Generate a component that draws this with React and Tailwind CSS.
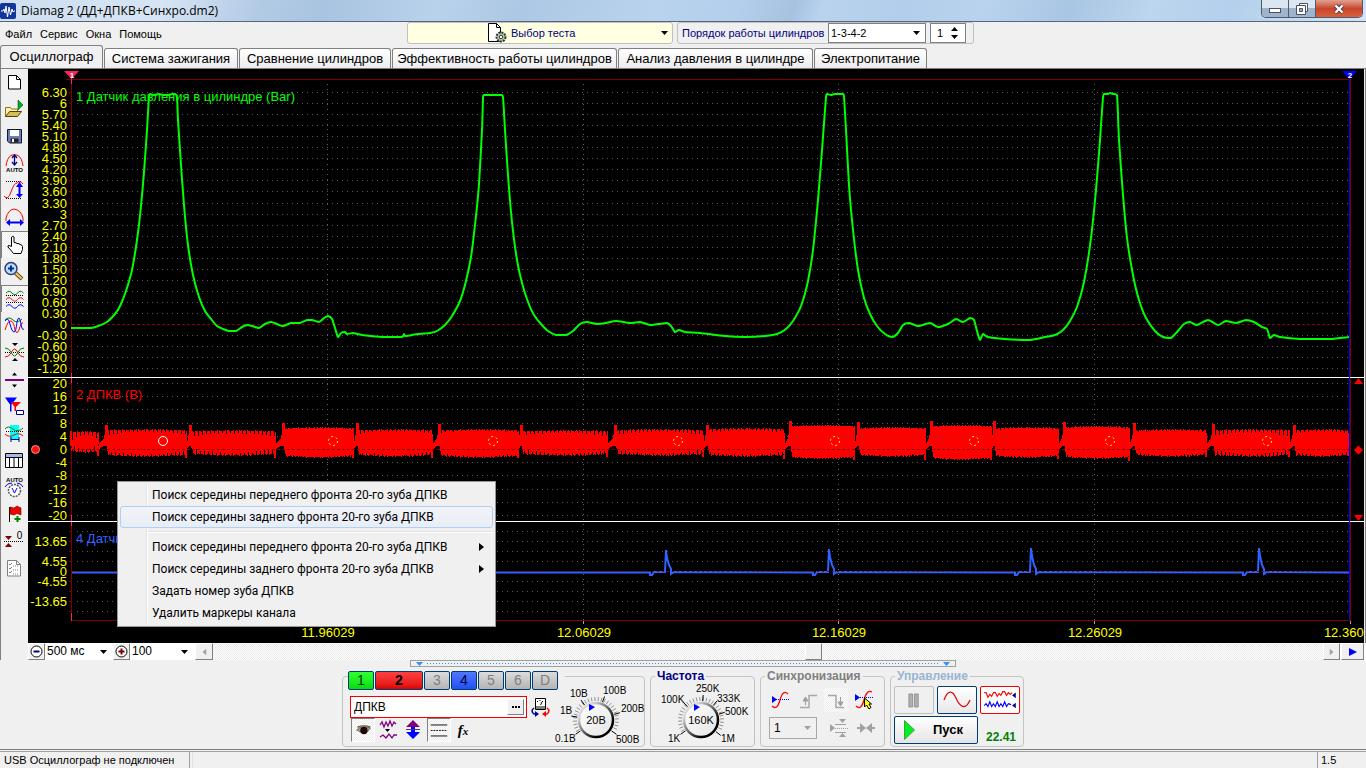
import React from 'react';

const SANS = "font-['Liberation_Sans',Arial,sans-serif]";
const CHECKER = 'bg-[repeating-conic-gradient(#ffffff_0_25%,#ebebeb_0_50%)] bg-[length:2px_2px]';

/* ---------- trace data ---------- */

const PRESSURE = [
  [71, 328], [91, 328], [98, 326], [107, 322], [115, 314], [120, 306], [126, 291], [132, 270], [137, 240], [141, 206],
  [144, 172], [147, 130], [149, 97], [150, 94], [154, 95], [159, 94], [163, 95], [168, 95], [172, 94], [175, 94], [177, 97],
  [178, 120], [181, 165], [184, 205], [188, 245], [193, 275], [199, 297], [205, 311], [211, 319], [217, 326], [223, 329],
  [229, 331], [236, 331], [242, 327], [247, 325], [252, 326], [259, 328], [265, 324], [271, 322], [277, 324], [283, 326],
  [291, 323], [300, 323], [307, 320], [312, 320], [319, 322], [324, 318], [328, 316], [332, 319], [335, 328], [338, 337],
  [341, 333], [345, 332], [347, 334], [353, 333], [362, 335], [382, 337], [402, 337], [404, 334], [405, 336], [412, 335],
  [418, 334], [430, 333], [437, 331], [445, 325], [452, 316], [460, 301], [466, 281], [471, 257], [475, 225], [479, 184],
  [482, 130], [483, 98], [484, 95], [501, 95], [503, 97], [505, 130], [508, 175], [512, 222], [517, 260], [522, 283],
  [528, 302], [534, 315], [541, 324], [548, 331], [556, 335], [566, 335], [573, 331], [580, 324], [587, 322], [597, 324],
  [606, 323], [616, 321], [630, 323], [640, 322], [650, 325], [658, 324], [667, 323], [671, 326], [675, 332], [679, 330],
  [685, 332], [700, 333], [725, 336], [745, 337], [765, 336], [777, 334], [786, 329], [793, 321], [801, 306], [808, 281],
  [813, 250], [818, 200], [822, 150], [826, 97], [827, 94], [831, 95], [835, 94], [843, 94], [844, 97], [846, 130], [849, 185], [853, 230],
  [858, 270], [864, 298], [870, 314], [877, 326], [885, 334], [892, 337], [898, 333], [903, 325], [909, 323], [918, 326],
  [930, 323], [938, 327], [948, 324], [956, 319], [963, 322], [970, 318], [974, 320], [977, 331], [980, 340], [983, 334],
  [988, 337], [1005, 339], [1030, 340], [1045, 337], [1055, 335], [1063, 330], [1070, 321], [1077, 307], [1084, 282],
  [1091, 238], [1096, 190], [1100, 140], [1103, 97], [1104, 94], [1108, 94], [1110, 93], [1113, 94], [1117, 95], [1119, 140],
  [1123, 195], [1127, 238], [1133, 275], [1139, 300], [1146, 318], [1155, 331], [1163, 337], [1171, 338], [1177, 332],
  [1184, 324], [1190, 322], [1197, 325], [1208, 320], [1218, 325], [1226, 321], [1236, 323], [1246, 320], [1254, 322],
  [1262, 327], [1267, 329], [1270, 338], [1274, 335], [1280, 337], [1300, 339], [1330, 339], [1349, 337],
];

function smoothPath(points) {
  let d = `M${points[0][0]} ${points[0][1]}`;
  for (let i = 0; i < points.length - 1; i += 1) {
    const p0 = points[Math.max(0, i - 1)];
    const p1 = points[i];
    const p2 = points[i + 1];
    const p3 = points[Math.min(points.length - 1, i + 2)];
    const k = 0.12;
    const lo = Math.min(p1[1], p2[1]);
    const hi = Math.max(p1[1], p2[1]);
    const clamp = (v, a, b) => Math.max(a, Math.min(b, v));
    const c1 = [clamp(p1[0] + (p2[0] - p0[0]) * k, p1[0], p2[0]), clamp(p1[1] + (p2[1] - p0[1]) * k, lo, hi)];
    const c2 = [clamp(p2[0] - (p3[0] - p1[0]) * k, p1[0], p2[0]), clamp(p2[1] - (p3[1] - p1[1]) * k, lo, hi)];
    d += `C${c1[0].toFixed(1)} ${c1[1].toFixed(1)} ${c2[0].toFixed(1)} ${c2[1].toFixed(1)} ${p2[0]} ${p2[1]}`;
  }
  return d;
}

/* start, end, top, bottom, notch depth, dip bottom, next spike top */
const BURSTS = [
  [71, 99, 431, 453, 7, 456, 425],
  [106, 187, 429, 457, 4, 458, 425],
  [190, 276, 430, 456, 5, 458, 423],
  [283, 354, 427, 458, 1, 458, 423],
  [357, 433, 429, 457, 3, 458, 424],
  [439, 519, 429, 458, 2, 458, 425],
  [521, 608, 430, 456, 4, 457, 425],
  [615, 704, 429, 456, 4, 457, 425],
  [707, 785, 428, 457, 3, 459, 421],
  [790, 855, 425, 459, 0, 460, 422],
  [858, 926, 427, 457, 1, 460, 421],
  [931, 992, 425, 460, 0, 460, 421],
  [994, 1059, 427, 458, 1, 459, 422],
  [1064, 1130, 426, 459, 1, 461, 423],
  [1134, 1207, 429, 457, 2, 457, 424],
  [1213, 1290, 429, 457, 5, 457, 425],
  [1294, 1349, 429, 457, 3, 456, 430],
];

function crankPath() {
  let d = '';
  let spike = 431;
  BURSTS.forEach(([a, b, top, bottom, notch, dip, next], n) => {
    const upper = [];
    const lower = [];
    for (let x = a + (n ? 2 : 0); x < b; x += 1) {
      const t = (x - a) / (b - a);
      const edge = 1 - Math.sin(Math.PI * t);
      const wob = ((x * 7 + n * 5) % 11) / 10;
      const cut = x % 4 === n % 4 ? notch * (0.5 + edge * 0.6) : 0;
      const y1 = Math.round(top + edge * 0.7 + wob * 1.2 + cut);
      const y2 = Math.round(bottom - edge * 1.6 - wob * 1.4 - (x % 4 === (n + 2) % 4 ? notch * (0.4 + edge * 0.6) : 0));
      upper.push(`L${x} ${y1}H${x + 1}`);
      lower.unshift(`L${x + 1} ${y2}H${x}`);
    }
    d += `M${a - 1} 446V${spike}H${a + 2}${upper.join('')}L${b} 444V${dip}H${b - 2}V${bottom - 2}${lower.join('')}L${a + 1} 446Z`;
    if (n < BURSTS.length - 1) {
      const c = BURSTS[n + 1][0];
      d += `M${b - 1} 450L${b} 444L${c - 2} 438L${c - 1} 432H${c + 1}V444L${b} 449Z`;
    }
    spike = next;
  });
  return d;
}

const PRESSURE_TICKS = [
  '6.30', '6', '5.70', '5.40', '5.10', '4.80', '4.50', '4.20', '3.90', '3.60', '3.30', '3', '2.70', '2.40', '2.10',
  '1.80', '1.50', '1.20', '0.90', '0.60', '0.30', '0', '-0.30', '-0.60', '-0.90', '-1.20',
].map((label, i) => [label, Math.round(92 + i * 11.05)]);
const CRANK_TICKS = ['20', '16', '12', '8', '4', '0', '-4', '-8', '-12', '-16', '-20'].map((label, i) => [label, Math.round(383 + i * 13.2)]);
const SYNC_TICKS = [['13.65', 541], ['4.55', 561], ['0', 571], ['-4.55', 581], ['-13.65', 601]];
const SYNC_GRID = [531, 541, 551, 561, 581, 591, 601, 611];
const TIME_TICKS = [[327, '11.96029'], [583, '12.06029'], [838, '12.16029'], [1094, '12.26029'], [1350, '12.36029']];
const SPARKS = [[666, 550], [829, 549], [1031, 548], [1259, 548]];

function Scope() {
  const rows = [
    ...PRESSURE_TICKS.filter((t) => t[0] !== '0').map((t) => t[1]),
    ...CRANK_TICKS.filter((t) => t[0] !== '0').map((t) => t[1]),
    ...SYNC_GRID,
  ];
  const spark = SPARKS.map(([x, y]) => `L${x - 16} 572.5V575H${x - 14}L${x - 12} 572H${x - 1}L${x} ${y}L${x + 1} ${y + 8}L${x + 3} 565L${x + 5} 569V574L${x + 8} 572`).join('');
  return (
    <svg viewBox="28 69 1336 574" className={`block h-auto w-full bg-black ${SANS}`} role="img" aria-label="Осциллограмма">
      <g shapeRendering="crispEdges" fill="none">
        {rows.map((y) => (
          <path key={y} d={`M77 ${y + 0.5}H1348`} stroke="#585858" strokeDasharray="1 4" />
        ))}
        {TIME_TICKS.slice(0, 4).map(([x]) => (
          <path key={x} d={`M${x + 0.5} 84V620`} stroke="#606060" strokeDasharray="1 4" />
        ))}
        {TIME_TICKS.map(([x]) => (
          <path key={x} d={`M${x + 0.5} 621v3`} stroke="#a0a0a0" />
        ))}
        <path d="M72 324.5H1350" stroke="#8b0000" strokeDasharray="3 2" />
        <path d="M66 79.5H1350.5V620.5H71.5V79" stroke="#800000" />
        <path d="M71.5 77V84M71.5 373V383M71.5 515V526M71.5 613V621" stroke="#ff2060" />
        {rows.map((y) => (
          <path key={y} d={`M69 ${y + 0.5}h2`} stroke="#800000" />
        ))}
      </g>
      <path d={smoothPath(PRESSURE)} fill="none" stroke="#00ff00" strokeWidth="2" strokeLinejoin="round" />
      <path d={crankPath()} fill="#ff0000" shapeRendering="crispEdges" />
      <g shapeRendering="crispEdges" fill="none">
        <path d="M77 436.5H1348" stroke="#6b4a4a" strokeDasharray="1 4" />
        <path d="M72 449.5H1350" stroke="#8b0000" strokeDasharray="3 2" />
      </g>
      <path d={`M72 572.5${spark}L1349 572.5`} fill="none" stroke="#2f62ff" strokeWidth="2" />
      <path d="M72 571.5H1348" stroke="#6a1030" strokeDasharray="2 3" shapeRendering="crispEdges" />
      <path d="M28 377.5H1364M28 521.5H1364" stroke="#ffffff" shapeRendering="crispEdges" />
      <path d="M1349.5 76V620" stroke="#0000ff" shapeRendering="crispEdges" />
      <circle cx="163" cy="441" r="4.5" fill="none" stroke="#ffffff" />
      {[333, 493, 678, 835, 974, 1110, 1267].map((x) => (
        <circle key={x} cx={x} cy="441" r="4.5" fill="none" stroke="#ffff00" strokeDasharray="2 2.7" />
      ))}
      <path d="M64 71H79L71.500 79Z" fill="#ff2060" />
      <path d="M1342 71H1357L1349.500 79Z" fill="#0000ff" />
      <g fill="#ffffff" fontSize="8" fontWeight="700" textAnchor="middle">
        <text x="72" y="78">1</text>
        <text x="1350" y="78">2</text>
      </g>
      <circle cx="35.5" cy="449.500" r="4" fill="#ff1010" stroke="#ff9090" />
      <path d="M1354 384h9l-4.500-6ZM1354 450l4.500-4.500 4.500 4.500-4.500 4.500ZM1354 515h9l-4.500 6Z" fill="#ff0000" />
      <g fontSize="13" fill="#ffff00" textAnchor="end">
        {[...PRESSURE_TICKS, ...CRANK_TICKS, ...SYNC_TICKS].map(([label, y], i) => (
          <text key={i} x="67" y={y + 5}>{label}</text>
        ))}
      </g>
      <g fontSize="13" fill="#ffff00" textAnchor="middle">
        {TIME_TICKS.map(([x, label]) => (
          <text key={x} x={x + 1} y="637">{label}</text>
        ))}
      </g>
      <g fontSize="13">
        <text x="76" y="101" fill="#00ff00">1 Датчик давления в цилиндре (Bar)</text>
        <text x="76" y="399" fill="#ff0000">2 ДПКВ (В)</text>
        <text x="76" y="543" fill="#2f62ff">4 Датчик</text>
      </g>
    </svg>
  );
}

/* ---------- side toolbar ---------- */

const TOOLS = [
  ['Новый', <g><path d="M7.5 6.500h8l4 4v9.500h-12z" fill="#fff" stroke="#000" /><path d="M15.500 6.500v4h4" fill="none" stroke="#000" /></g>],
  ['Открыть', <g><path d="M17 4l5 5-5 5z" fill="#00b020" stroke="#005010" strokeWidth=".6" /><path d="M4.500 20.500v-9h5l1 1.500h6v3" fill="#fff2a8" stroke="#8a7420" /><path d="M4.500 20.500l4-5h12l-4 5z" fill="#d8bc58" stroke="#4e4210" /></g>],
  ['Сохранить', <g><path d="M6.500 6.500h14v13.500h-12l-2-2z" fill="#6c7fb4" stroke="#101830" /><path d="M9 7h9v6h-9z" fill="#fff" /><path d="M9.500 15.500h8v4h-8z" fill="#222" /><path d="M11 16h2v3h-2z" fill="#fff" /></g>],
  ['Авто масштаб', <g><path d="M5 16Q6 8 10 5.500Q13.500 3.500 17 5.500Q21 8 22 16" fill="none" stroke="#f00" /><path d="M13.500 5v9M11 8l2.500-3 2.500 3M11 12l2.500 3 2.500-3" fill="none" stroke="#00008b" strokeWidth="1.300" /><text x="13.500" y="22" fontSize="6" fontWeight="700" textAnchor="middle" fill="#000">AUTO</text></g>],
  ['Масштаб по вертикали', <g fill="none"><path d="M5 4.500h16M5 21.500h15" stroke="#000" strokeDasharray="1 1" /><path d="M3 19q4 5 7-4t6-9q3-3 6 1" stroke="#f00" /><path d="M18.500 7v12" stroke="#00f" strokeWidth="2" /><path d="M15 10l3.500-5 3.500 5zM15 17l3.500 4 3.500-4z" fill="#00f" /></g>],
  ['Масштаб по горизонтали', <g fill="none"><path d="M5 17V14q2-8 8-9 7 1 9 9v3" stroke="#f00" /><path d="M8 18.500h12" stroke="#00f" strokeWidth="2" /><path d="M5 18.500l4-3.500v7zM23 18.500l-4-3.500v7z" fill="#00f" /></g>],
  ['Рука', <path d="M10.500 15.500V6q1.200-1.500 2.500 0v5.500l2 .3 1 .7 2 .2 1 .8 1.500.4 1 1.600v3l-1.500 4h-7.500l-2-2.500-3.500-4q-.5-1.500 1-1.500z" fill="#fff" stroke="#000" />, true],
  ['Лупа', <g><path d="M14.500 15l6.500 6" stroke="#6b4a10" strokeWidth="4" /><path d="M14.500 15l6 5.500" stroke="#f0cc70" strokeWidth="2" /><circle cx="10" cy="10.500" r="6" fill="#b9dcff" stroke="#30406a" strokeWidth="1.500" /><path d="M7 10.500h6M10 7.500v6" stroke="#003090" strokeWidth="2" /></g>],
  ['Раздельно', <g fill="none"><path d="M5 8q3-3.500 6 0t5.500 0 6 0" stroke="#008000" /><path d="M5 10.500h18M5 17.500h18" stroke="#000" strokeDasharray="1 1" /><path d="M5 14.500q3-3.500 6 0t5.500 0 6 0" stroke="#f00" /><path d="M5 21.500q3-3.500 6 0t5.500 0 6 0" stroke="#00f" /></g>, true],
  ['Совместно', <g fill="none"><path d="M4 8q4-4 8 0t9-1" stroke="#008000" /><path d="M4 18q3-10 6-9t4 9q2 5 4 0 2-8 4-7" stroke="#f00" /><path d="M4 9q3-5 5 3t4 8q2 0 3-10 2-9 4 2 1 7 3 5" stroke="#00f" /></g>],
  ['Сжать', <g fill="none"><path d="M4 13.500h19" stroke="#000" strokeDasharray="1 1" /><path d="M4 18q4 0 6-4 3.500-8 7 0 2 4 6 4" stroke="#f00" /><path d="M4 9q4 0 6 4 3.500 8 7 0 2-4 6-4" stroke="#008000" /><path d="M11 4h6l-3 3zM11 22h6l-3-3z" fill="#000" /></g>],
  ['Разделитель', <g><path d="M4 13h19v2H4z" fill="#800080" /><path d="M11 9.500h5l-2.500-3zM11 18.500h5l-2.500 3z" fill="#000" /></g>],
  ['Маркеры', <g><path d="M4 4.500h12l-5.500 7v7h-1.500v-7z" fill="#00f" /><path d="M10 9h10l-5 5v4h-1.500v-4z" fill="#f00" /><path d="M15.500 17.500h7v4h-7z" fill="#fff" stroke="#00008b" /></g>],
  ['Диапазон', <g fill="none"><path d="M9 5h9v15H9z" fill="#00ffff" /><path d="M4 9q3-4 8 0t10-1" stroke="#008000" /><path d="M5 11.500h18" stroke="#000" strokeDasharray="1 1" /><path d="M4 14q4 4 9 1t9 1" stroke="#f00" /><path d="M10 19.500h8M10 17v5M18 17v5" stroke="#00008b" /></g>],
  ['Таблица', <g><path d="M4.500 6.500h17v14h-17z" fill="#fff" stroke="#000" /><path d="M5 7h16v3H5z" fill="#a8b8e8" /><path d="M5 10.500h16M8.500 10v10M13 10v10M17.500 10v10" stroke="#000" /></g>],
  ['Авто напряжение', <g><text x="13.500" y="8" fontSize="6" fontWeight="700" textAnchor="middle" fill="#000">AUTO</text><path d="M4 13q2-4 7-4M22 13q-2-4-6-4" stroke="#00f" fill="none" /><circle cx="13.500" cy="16.500" r="6" fill="#fff" stroke="#555" strokeWidth="1.500" strokeDasharray="2 1" /><path d="M11 14l2.500 5 2.500-5" fill="none" stroke="#00f" /></g>],
  ['Добавить флаг', <g><path d="M8.500 6v15" stroke="#000" /><path d="M9 6l4 1 3-2 4 2v7l-4-1.500-3 1.500-4-1z" fill="#f00000" stroke="#700000" strokeWidth=".6" /><path d="M16.500 15v6M13.500 18h6" stroke="#008000" strokeWidth="2" /></g>],
  ['Сброс нуля', <g><path d="M4 8h7l-3.500 4zM4 19h7l-3.500-4z" fill="#800000" /><path d="M3 13.500h20" stroke="#000" strokeDasharray="1 1" /><text x="18.500" y="11" fontSize="10" textAnchor="middle" fill="#000">0</text></g>],
  ['Список', <g fill="none" stroke="#808080"><path d="M6.500 5.500h9l4 4v11.500h-13z" fill="#fff" /><path d="M15.500 5.500v4h4M8 9l1 1 2-2M8 13l1 1 2-2M8 17l1 1 2-2" /><path d="M12 11h6M12 15h6M12 19h6" strokeDasharray="1 1" /></g>],
];

function Toolbar() {
  return (
    <div role="toolbar" aria-label="Инструменты" className="flex w-7 shrink-0 flex-col border-l border-[#808080]">
      {TOOLS.map(([label, icon, pressed]) => (
        <button
          key={label}
          type="button"
          aria-label={label}
          aria-pressed={Boolean(pressed)}
          className={`block h-[27px] w-full overflow-hidden border-t border-l ${pressed ? `border-[#808080] ${CHECKER}` : 'border-transparent'}`}
        >
          <svg viewBox="1 1 27 27" className={`block size-[27px] ${SANS}`}>{icon}</svg>
        </button>
      ))}
    </div>
  );
}

/* ---------- window chrome ---------- */

function TitleBar() {
  return (
    <header className="flex h-[22px] items-start border-b border-[#56677d] bg-[linear-gradient(110deg,#cfdff0_0%,#d6e4f3_12%,#b2cbe5_19%,#a9c4e0_24%,#b9d2ec_32%,#adc8e4_38%,#b9d3ee_48%,#b3cfeb_54%,#a6c2df_58%,#b9d3ee_60%,#b3ceea_66%,#b9d3ee_72%,#a9c6e2_78%,#bdd5ee_84%,#b4d0ec_90%,#d5e4f4_100%)]">
      <svg viewBox="0 0 16 16" className="mt-[3px] size-4 shrink-0">
        <rect width="16" height="16" rx="2" fill="#12359c" />
        <path d="M1 8h2l1-2 1 4 1-7 1.500 11L9 4l1.500 8L12 6l1 3 1-1h1" fill="none" stroke="#fff" />
      </svg>
      <h1 className="ml-[5px] text-[12px] leading-[21px] font-['Open_Sans','Noto_Sans',sans-serif] text-black">Diamag 2 (ДД+ДПКВ+Синхро.dm2)</h1>
      <div className="mr-[3px] ml-auto flex h-[18px] overflow-hidden rounded-b-[5px] border border-t-0 border-[#4c5b6e]">
        <button type="button" aria-label="Свернуть" className="flex w-[27px] items-center justify-center border-r border-[#4c5b6e] bg-linear-to-b from-[#dbe6f1] from-50% to-[#9fb4ca] to-50%">
          <span className="mt-[3px] block h-[5px] w-3 border border-[#4c5060] bg-white" />
        </button>
        <button type="button" aria-label="Восстановить" className="flex w-[27px] items-center justify-center border-r border-[#4c5b6e] bg-linear-to-b from-[#dbe6f1] from-50% to-[#9fb4ca] to-50%">
          <svg viewBox="0 0 12 12" className="size-3" fill="#fff" stroke="#4c5060"><path d="M3.500.5h8v8h-8z" /><path d="M.5 2.500h9v9h-9z" /><path d="M3.500 5.500h3v3h-3z" fill="#9fb4ca" /></svg>
        </button>
        <button type="button" aria-label="Закрыть" className="flex w-[46px] items-center justify-center bg-linear-to-b from-[#e0a090] from-0% via-[#c8452c] via-50% to-[#d8603c]">
          <svg viewBox="0 0 12 10" className="h-[10px] w-3"><path d="M2.500 1.500l7 7M9.500 1.500l-7 7" stroke="#4c4050" strokeWidth="4" /><path d="M2.500 1.500l7 7M9.500 1.500l-7 7" stroke="#fff" strokeWidth="2.200" /></svg>
        </button>
      </div>
    </header>
  );
}

function Caret({ className = '' }) {
  return (
    <svg viewBox="0 0 7 4" className={`pointer-events-none h-1 w-[7px] shrink-0 ${className}`}><path d="M0 0h7L3.500 4z" fill="currentColor" /></svg>
  );
}

function MenuRow() {
  return (
    <div className={`flex h-6 items-start text-[11px] ${SANS}`}>
      <nav className="flex w-[407px] shrink-0 items-center gap-2 pl-[5px] leading-6 text-black">
        {['Файл', 'Сервис', 'Окна', 'Помощь'].map((m) => <button key={m} type="button">{m}</button>)}
      </nav>
      <button type="button" className="flex h-[22px] w-[266px] shrink-0 items-center rounded-[3px] border border-[#c0c0c0] bg-[#ffffe1] text-[#000080]">
        <svg viewBox="0 0 20 20" className="ml-[79px] size-5 shrink-0">
          <path d="M1.500.5h8l4 4v14h-12z" fill="#fff" stroke="#000" /><path d="M9.500.5v4h4" fill="none" stroke="#000" />
          <circle cx="14" cy="14" r="4.500" fill="#b8ccb8" stroke="#303830" strokeWidth="2" strokeDasharray="2 1" /><circle cx="14" cy="14" r="1.800" fill="#fff" stroke="#303830" />
        </svg>
        <span className="ml-1 grow text-left">Выбор теста</span>
        <Caret className="mr-1 text-black" />
      </button>
      <div className="ml-1 flex h-[22px] w-[297px] shrink-0 items-center rounded-[3px] border border-[#c0c0c0] pl-1 text-[#000080]">
        <label htmlFor="order" className="w-[146px] shrink-0 whitespace-nowrap">Порядок работы цилиндров</label>
        <div className="relative">
          <select id="order" className="h-5 w-[98px] appearance-none border border-[#808080] bg-white pl-0.5 text-black"><option>1-3-4-2</option></select>
          <Caret className="absolute top-2 right-1.5 text-black" />
        </div>
        <div className="ml-1 flex h-5 w-9 items-center border border-[#808080] bg-white text-black">
          <input aria-label="Номер цилиндра" defaultValue="1" className="w-5 pl-1.5 outline-none" />
          <div className="flex flex-col gap-1">
            <button type="button" aria-label="Больше"><Caret className="block rotate-180" /></button>
            <button type="button" aria-label="Меньше"><Caret className="block" /></button>
          </div>
        </div>
      </div>
    </div>
  );
}

const TABS = [
  ['Осциллограф', 'w-[103px]'],
  ['Система зажигания', 'w-[134px]'],
  ['Сравнение цилиндров', 'w-[152px]'],
  ['Эффективность работы цилиндров', 'w-[225px]'],
  ['Анализ давления в цилиндре', 'w-[195px]'],
  ['Электропитание', 'w-[113px]'],
];

function Tabs() {
  return (
    <div role="tablist" className={`flex h-[23px] items-end gap-px border-b border-[#808080] text-[13px] text-black ${SANS}`}>
      {TABS.map(([name, width], i) => (
        <button
          key={name}
          type="button"
          role="tab"
          aria-selected={i === 0}
          className={`shrink-0 rounded-t-[3px] border border-b-0 border-[#808080] whitespace-nowrap ${width} ${i === 0 ? 'h-[23px] bg-[#f0f0f0]' : 'h-5 bg-linear-to-b from-white to-[#ececec]'}`}
        >
          {name}
        </button>
      ))}
    </div>
  );
}

/* ---------- context menu ---------- */

const FRONT = 'Поиск середины переднего фронта 20-го зуба ДПКВ';
const BACK = 'Поиск середины заднего фронта 20-го зуба ДПКВ';

function MenuItem({ children, active, sub }) {
  return (
    <button
      type="button"
      role="menuitem"
      className={`relative flex h-[22px] w-full items-center justify-between rounded-[3px] border pr-2 pl-[31px] text-left whitespace-nowrap ${active ? 'border-[#aecff7] bg-linear-to-b from-[#f2f4f8]/80 to-[#e6edf8]/80' : 'border-transparent'}`}
    >
      {children}
      {sub && <svg viewBox="0 0 5 8" className="h-2 w-[5px]"><path d="M0 0l5 4-5 4z" fill="#000" /></svg>}
    </button>
  );
}

function ContextMenu() {
  return (
    <div role="menu" className="absolute top-[412px] left-[89px] w-[379px] border border-[#979797] bg-[#f0f0f0] p-0.5 font-['Roboto','Open_Sans',sans-serif] text-[12px] text-black">
      <div className="absolute inset-y-0.5 left-7 w-0.5 border-l border-[#e2e3e3] bg-white" />
      <MenuItem>{FRONT}</MenuItem>
      <MenuItem active>{BACK}</MenuItem>
      <div className="my-[3px] ml-7 h-0.5 border-t border-[#e0e0e0] bg-white" />
      <MenuItem sub>{FRONT}</MenuItem>
      <MenuItem sub>{BACK}</MenuItem>
      <MenuItem>Задать номер зуба ДПКВ</MenuItem>
      <MenuItem>Удалить маркеры канала</MenuItem>
    </div>
  );
}

/* ---------- scroll row and splitter ---------- */

const RAISED = 'flex h-[17px] shrink-0 items-center justify-center border border-t-white border-l-white border-r-[#808080] border-b-[#808080] bg-[#f0f0f0]';

function ScrollRow() {
  return (
    <div className="flex border-l border-[#808080]">
      <div className={`ml-[27px] flex h-[17px] grow bg-white text-[12px] text-black ${SANS}`}>
        <button type="button" aria-label="Уменьшить развёртку" className={`${RAISED} w-[17px]`}>
          <svg viewBox="0 0 13 13" className="size-[13px]"><circle cx="6.500" cy="6.500" r="5.500" fill="#fff" stroke="#000" /><path d="M3.500 6.500h6" stroke="#00008b" strokeWidth="2" /></svg>
        </button>
        <div className="relative">
          <select aria-label="Развёртка" className="block h-[17px] w-[68px] appearance-none pl-0.5 leading-[17px]"><option>500 мс</option></select>
          <Caret className="absolute top-[7px] right-1.5" />
        </div>
        <button type="button" aria-label="Увеличить развёртку" className={`${RAISED} w-[17px]`}>
          <svg viewBox="0 0 13 13" className="size-[13px]"><circle cx="6.500" cy="6.500" r="5.500" fill="#fff" stroke="#000" /><path d="M3.500 6.500h6M6.500 3.500v6" stroke="#800000" strokeWidth="2" /></svg>
        </button>
        <div className="relative mr-px">
          <select aria-label="Масштаб" className="block h-[17px] w-[64px] appearance-none pl-0.5 leading-[17px]"><option>100</option></select>
          <Caret className="absolute top-[7px] right-1.5" />
        </div>
        <button type="button" aria-label="Влево" className={`${RAISED} w-[18px] text-[#a0a0a0]`}><Caret className="rotate-90" /></button>
        <div className={`flex grow ${CHECKER}`}>
          <div className="grow-[592]" />
          <div className={`${RAISED} w-[17px]`} />
          <div className="grow-[501]" />
        </div>
        <button type="button" aria-label="Вправо" className={`${RAISED} w-[17px] text-[#a0a0a0]`}><Caret className="-rotate-90" /></button>
        <button type="button" aria-label="Воспроизвести" className={`${RAISED} mr-0.5 ml-px w-[23px]`}><svg viewBox="0 0 8 8" className="size-2"><path d="M0 0l8 4-8 4z" fill="#00f" /></svg></button>
      </div>
    </div>
  );
}

function Splitter() {
  return (
    <div className="mx-auto flex h-[7px] w-[546px] items-center gap-1 border border-[#a0a0a0] px-[5px]">
      <Caret className="text-[#3090ff]" />
      <div className="h-px grow bg-[repeating-linear-gradient(90deg,#3090ff_0_1px,transparent_1px_3px)]" />
      <Caret className="text-[#3090ff]" />
    </div>
  );
}

/* ---------- bottom panel ---------- */

function Group({ title, color = '', width, children }) {
  return (
    <div role="group" aria-label={title} className={`relative h-[77px] shrink-0 ${width}`}>
      <div className="absolute inset-x-0 top-[6px] bottom-0 rounded-[4px] border border-[#c4c4c4]" />
      <div className="relative">
        {title && <div className={`ml-[5px] w-max bg-[#f0f0f0] px-0.5 text-[12px] leading-[13px] font-bold ${SANS} ${color}`}>{title}</div>}
        {children}
      </div>
    </div>
  );
}

function Knob({ cx, value, labels, from, to }) {
  const ticks = [];
  for (let a = from; a <= to; a += 9) ticks.push(a);
  const pt = (a, r) => [cx + r * Math.cos((a * Math.PI) / 180), 720 + r * Math.sin((a * Math.PI) / 180)];
  return (
    <>
      <defs>
        <linearGradient id={`rim${cx}`} x1="0" y1="0" x2="1" y2="1"><stop offset=".2" stopColor="#d8d8d8" /><stop offset=".75" stopColor="#000" /></linearGradient>
        <linearGradient id={`face${cx}`} x1="0" y1="0" x2="1" y2="1"><stop offset="0" stopColor="#fff" /><stop offset="1" stopColor="#e4e4e4" /></linearGradient>
      </defs>
      {ticks.map((a) => {
        const [x1, y1] = pt(a, 19);
        const [x2, y2] = pt(a, 23);
        return <path key={a} d={`M${x1} ${y1}L${x2} ${y2}`} stroke="#909090" />;
      })}
      {labels.map(([text, , , a]) => {
        const [x1, y1] = pt(a, 19);
        const [x2, y2] = pt(a, 25);
        return <path key={text} d={`M${x1} ${y1}L${x2} ${y2}`} stroke="#000" />;
      })}
      <circle cx={cx} cy="720" r="17" fill={`url(#face${cx})`} stroke={`url(#rim${cx})`} strokeWidth="2.500" />
      <path d={`M${cx - 7} 704l6 3-6 4z`} fill="#00f" />
      <text x={cx} y="724" fontSize="11" textAnchor="middle" fill="#000">{value}</text>
      <g fontSize="10" fill="#000">
        {labels.map(([text, x, y]) => <text key={text} x={x} y={y}>{text}</text>)}
      </g>
    </>
  );
}

const CHANNELS = [
  ['1', 'w-[26px] text-[#003000] bg-linear-to-b from-[#30ff30] to-[#00dd10]'],
  ['2', 'w-12 font-bold text-black bg-linear-to-b from-[#ff4040] to-[#dd0000]'],
  ['3', 'w-[26px] text-[#808080] bg-linear-to-b from-[#dcdcdc] to-[#b4b4b4]'],
  ['4', 'w-[26px] text-[#000040] bg-linear-to-b from-[#5078ff] to-[#2050f0]'],
  ['5', 'w-[26px] text-[#808080] bg-linear-to-b from-[#dcdcdc] to-[#b4b4b4]'],
  ['6', 'w-[26px] text-[#808080] bg-linear-to-b from-[#dcdcdc] to-[#b4b4b4]'],
  ['D', 'w-[26px] text-[#808080] bg-linear-to-b from-[#dcdcdc] to-[#b4b4b4]'],
];

function IconButton({ label, box = '0 0 24 24', size = 'h-6 w-6', className = '', children }) {
  return (
    <button type="button" aria-label={label} className={`flex shrink-0 items-center justify-center ${size} ${className}`}>
      <svg viewBox={box} className="block size-full" fill="none">{children}</svg>
    </button>
  );
}

const SUNKEN = `border border-t-[#808080] border-l-[#808080] border-r-white border-b-white ${CHECKER}`;

function ChannelPanel() {
  return (
    <Group width="w-[303px]">
      <div className="flex">
        <div className="w-[216px] shrink-0">
          <div className="ml-1.5 flex w-[217px] gap-px bg-[#f0f0f0] pt-px">
            {CHANNELS.map(([name, look]) => (
              <button key={name} type="button" className={`h-[19px] shrink-0 rounded-[2px] border border-[#003c74] text-[14px] leading-[17px] ${SANS} ${look}`}>{name}</button>
            ))}
          </div>
          <div className="mt-1.5 ml-2 flex items-center gap-1">
            <div className="flex h-[22px] w-[177px] shrink-0 border border-[#f00000] bg-white p-0.5">
              <input aria-label="Название канала" defaultValue="ДПКВ" className={`min-w-0 grow pl-px text-[12px] text-black outline-none ${SANS}`} />
              <button type="button" aria-label="Выбрать датчик" className="flex w-[17px] shrink-0 items-center justify-center gap-px border border-t-white border-l-white border-r-[#808080] border-b-[#808080] bg-[#f0f0f0]">
                <span className="size-0.5 bg-black" /><span className="size-0.5 bg-black" /><span className="size-0.5 bg-black" />
              </button>
            </div>
            <IconButton label="Калибровка" box="0 0 20 20" size="h-5 w-5">
              <path d="M4.500 1.500h10v11h-10z" fill="#fff" stroke="#000" /><path d="M5 9h9v3H5z" fill="#808080" /><path d="M6 4l1 1M9 3v1M12 4l-1 1M9.500 8L11 5" stroke="#000" />
              <path d="M3 11q-4 3 0 6h2" stroke="#00008b" strokeWidth="1.500" /><path d="M4 14l4 3-4 3z" fill="#00008b" />
              <path d="M16 11q4 3 0 6h-2" stroke="#f00" strokeWidth="1.500" /><path d="M15 14l-4 3 4 3z" fill="#f00" />
            </IconButton>
          </div>
          <div className="ml-[9px] flex">
            <IconButton label="Видимость" className={SUNKEN}>
              <path d="M5 12q6-6 15-2-5 9-15 2z" fill="#a0a090" stroke="#707060" /><circle cx="13" cy="12.500" r="4" fill="#200808" /><path d="M6 9q7-3 14 0" stroke="#605c50" strokeWidth="1.500" />
            </IconButton>
            <IconButton label="Форма сигнала" className="ml-px">
              <path d="M4 7l2-3 2 5 2-5 2 4 2-5 2 5 2-4 2 2" stroke="#800080" strokeWidth="1.300" /><path d="M9 11h5l-2.500 3z" fill="#000" /><path d="M4 19l3-2 3 3 3-4 3 4 2-3h3" stroke="#800080" strokeWidth="1.300" />
            </IconButton>
            <IconButton label="Сместить" className="ml-px">
              <path d="M5 9l7-7 7 7h-5v4h-4V9z" fill="#800080" /><path d="M5 14l7 7 7-7h-5v-5h-4v5z" fill="#00f" /><path d="M5 11.500h14" stroke="#404080" />
            </IconButton>
            <IconButton label="Уровни" className={`ml-0.5 ${SUNKEN}`}>
              <path d="M3 6.500h18M3 18.500h18" stroke="#000" /><path d="M3 12.500h18" stroke="#000" strokeDasharray="2 1" />
            </IconButton>
            <button type="button" aria-label="Функция" className="ml-0.5 h-6 w-5 text-[15px] leading-6 font-bold text-black italic font-['Liberation_Serif',serif]">f<span className="text-[11px]">x</span></button>
          </div>
        </div>
        <svg viewBox="558 675 86 70" className={`mt-[5px] block h-[70px] w-[86px] shrink-0 overflow-visible ${SANS}`}>
          <Knob
            cx={596}
            value="20В"
            from={150}
            to={390}
            labels={[['0.1В', 555, 742, 145], ['1В', 560, 714, 189], ['10В', 570, 697, 233], ['100В', 603, 694, 290], ['200В', 621, 712, 343], ['500В', 616, 743, 35]]}
          />
        </svg>
      </div>
    </Group>
  );
}

function FrequencyPanel() {
  return (
    <Group title="Частота" color="text-[#000080]" width="w-[105px]">
      <svg viewBox="651 683 103 62" className={`ml-px block h-[62px] w-[103px] ${SANS}`}>
        <Knob
          cx={701}
          value="160K"
          from={150}
          to={390}
          labels={[['1K', 668, 742, 145], ['100K', 661, 703, 225], ['250K', 696, 692, 275], ['333K', 717, 702, 310], ['500K', 725, 715, 342], ['1M', 721, 742, 38]]}
        />
      </svg>
    </Group>
  );
}

function SyncPanel() {
  return (
    <Group title="Синхронизация" color="text-[#808080]" width="w-[125px]">
      <div className="mt-[5px] ml-2 flex items-center gap-1">
        <IconButton label="Уровень синхронизации">
          <path d="M4 18q5 5 8-6t8-6" stroke="#f00" strokeWidth="1.300" /><path d="M6 11.500h16" stroke="#00f" strokeDasharray="1 1" /><path d="M4 8l5 3.500-5 3.500z" fill="#00f" />
        </IconButton>
        <IconButton label="Передний фронт">
          <path d="M4 19.500h9v-12h8" stroke="#a8a8a8" strokeWidth="1.500" /><path d="M9.500 17V11M7 13l2.500-4 2.500 4z" fill="#a0a0a0" stroke="#a0a0a0" />
        </IconButton>
        <IconButton label="Задний фронт" className={CHECKER}>
          <path d="M4 7.500h8v12h8" stroke="#a8a8a8" strokeWidth="1.500" /><path d="M16.500 9v8M14 14l2.500 4 2.500-4z" fill="#a0a0a0" stroke="#a0a0a0" />
        </IconButton>
        <IconButton label="Указать уровень">
          <path d="M4 18q5 5 8-6t8-8" stroke="#f00" strokeWidth="1.300" /><path d="M6 9.500h16" stroke="#00f" strokeDasharray="1 1" /><path d="M3 6l5 3.500-5 3.500z" fill="#00f" /><path d="M12.500 10v9l2-2 2.500 4 2-1.500-2-3.500h2.500z" fill="#ff0" stroke="#000" />
        </IconButton>
      </div>
      <div className="mt-[5px] ml-[9px] flex h-[22px] items-center">
        <div className="relative mr-[9px]">
          <select aria-label="Канал синхронизации" className={`block h-[22px] w-12 appearance-none border border-[#a8a8a8] bg-[#f0f0f0] pl-1 text-[12px] text-black ${SANS}`}><option>1</option></select>
          <Caret className="absolute top-[9px] right-1.5 text-[#a0a0a0]" />
        </div>
        <IconButton label="Уровни запуска">
          <path d="M4 8l5 4-5 4zM13 3h7l-3.500 4zM13 21h7l-3.500-4z" fill="#a0a0a0" /><path d="M9 8.500h11M9 16.500h11" stroke="#a0a0a0" /><path d="M9 12.500h13" stroke="#a0a0a0" strokeDasharray="1 1" />
        </IconButton>
        <IconButton label="Сблизить" className="ml-1">
          <path d="M3 12h5M16 12h5" stroke="#a0a0a0" strokeWidth="2" /><path d="M6 7l6 5-6 5zM18 7l-6 5 6 5z" fill="#a0a0a0" />
        </IconButton>
      </div>
    </Group>
  );
}

function ControlPanel() {
  return (
    <Group title="Управление" color="text-[#9ab4d2]" width="w-[134px]">
      <div className="mt-[3px] ml-1 flex gap-[3px]">
        <IconButton label="Пауза" box="0 0 40 28" size="h-7 w-10" className="rounded-[2px] border border-[#c0c0c0]">
          <path d="M14.500 7.500h4v14h-4zM20.500 7.500h4v14h-4z" fill="#b0b0b0" stroke="#909090" />
        </IconButton>
        <IconButton label="Один сигнал" box="0 0 40 28" size="h-7 w-10" className="rounded-[2px] border border-[#003c74] bg-linear-to-b from-white to-[#e8e8e8]">
          <path d="M6 14C10 3 15 3 19 12S29 26 34 14" stroke="#e00000" strokeWidth="1.300" />
        </IconButton>
        <IconButton label="Несколько сигналов" box="0 0 40 28" size="h-7 w-10" className="rounded-[2px] border border-[#f00000] bg-white">
          <path d="M3 6h2l2 5 2-3 2 2 2-4h2l2 4 2-3 2 2 2-4h2l2 4 2-3 2 2 2-2" stroke="#f00" strokeWidth="1.200" /><path d="M3 20l2-2 2 3 2-5 2 5 2-3 2 3 2-5 2 5 2-3 2 3 2-5 2 5 2-3 3 1" stroke="#00f" strokeWidth="1.200" />
          <path d="M37 6l-4 3 4 3zM37 17l-4 3 4 3z" fill="#00008b" />
        </IconButton>
      </div>
      <div className="mt-0.5 ml-1 flex items-end gap-2">
        <button type="button" className={`flex h-7 w-[84px] shrink-0 items-center rounded-[2px] border border-[#003c74] bg-linear-to-b from-white to-[#e4e4e4] pl-[9px] text-[13px] font-bold text-black ${SANS}`}>
          <svg viewBox="0 0 11 20" className="mr-[18px] h-5 w-[11px]"><path d="M.5.5l10 9.500-10 9.500z" fill="#00f020" stroke="#40a040" /></svg>
          Пуск
        </button>
        <output className={`text-[12px] leading-[14px] font-bold text-[#008000] ${SANS}`}>22.41</output>
      </div>
    </Group>
  );
}

function StatusBar() {
  return (
    <footer className={`flex h-[17px] items-stretch border-b border-[#3c4a5c] text-[11px] leading-[17px] text-black ${SANS}`}>
      <div className="w-[190px] border-r border-[#a0a0a0] pl-1">USB Осциллограф не подключен</div>
      <div className="ml-0.5 grow border-l border-[#e0e0e0]" />
      <div className="w-[49px] border-l border-[#a0a0a0] pl-[3px]">1.5</div>
    </footer>
  );
}

export default function App() {
  return (
    <div className="flex min-h-screen flex-col overflow-x-hidden bg-[#f0f0f0]">
      <TitleBar />
      <MenuRow />
      <Tabs />
      <main className="flex">
        <Toolbar />
        <div className="relative min-w-0 grow">
          <Scope />
          <ContextMenu />
        </div>
        <div className="w-0.5 shrink-0 border-r border-[#808080]" />
      </main>
      <ScrollRow />
      <Splitter />
      <div className="flex justify-center gap-[5px] border-b border-[#808080] pt-[3px] pb-0.5">
        <ChannelPanel />
        <FrequencyPanel />
        <SyncPanel />
        <ControlPanel />
      </div>
      <div className="mt-px border-t border-[#a0a0a0]"><StatusBar /></div>
    </div>
  );
}
